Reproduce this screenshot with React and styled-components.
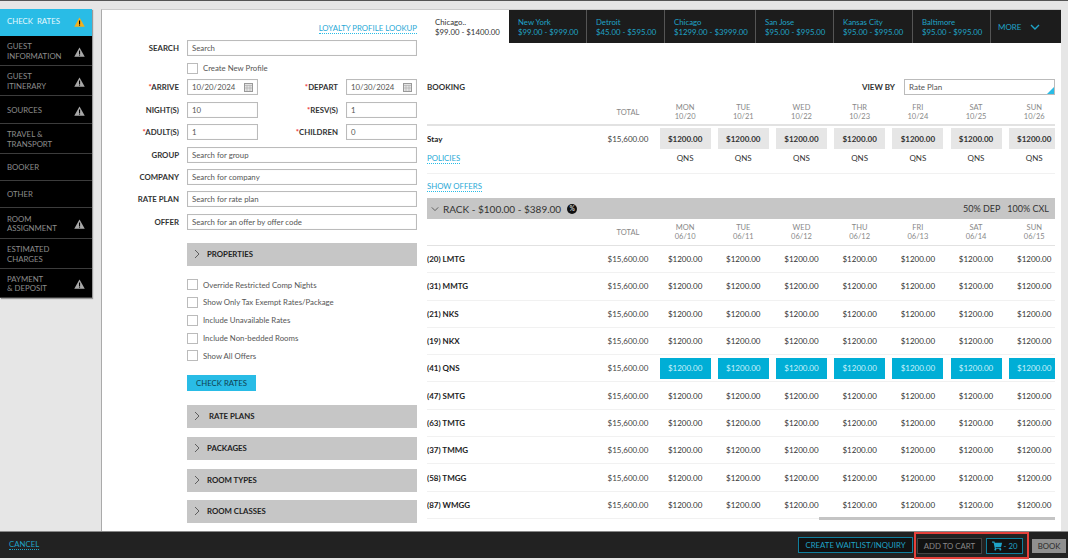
import React from 'react';
import styled, { createGlobalStyle } from 'styled-components';
import { FaShoppingCart } from 'react-icons/fa';

const GlobalStyle = createGlobalStyle`
  html, body {
    margin: 0;
    padding: 0;
    background: #e6e6e6;
    font-family: Lato, "Open Sans", sans-serif;
    color: #222;
  }
  * { box-sizing: border-box; }
`;

const Page = styled.div`
  width: 1068px;
  height: 560px;
  display: flex;
  flex-direction: column;
  border-top: 1px solid #555;
  overflow: hidden;
`;

const Content = styled.div`
  flex: 1;
  min-height: 0;
  display: flex;
  padding-top: 8px;
`;

const Sidebar = styled.nav`
  width: 92px;
  align-self: flex-start;
  flex-shrink: 0;
  margin-right: 9px;
  box-shadow: 1px 1px 1px #999;
`;

const SideItem = styled.div`
  height: ${p => p.$height}px;
  display: flex;
  align-items: center;
  justify-content: space-between;
  padding: ${p => (p.$active ? 0 : 2)}px 7px 0;
  background: ${p => (p.$active ? '#29bce6' : '#000')};
  color: ${p => (p.$active ? '#e6f8fd' : '#8d8d8d')};
  border-bottom: 1px solid ${p => (p.$active ? '#29bce6' : '#3c3c3c')};
  font-size: 7.8px;
  line-height: 9.4px;
  white-space: pre-line;
  word-spacing: ${p => (p.$active ? 2 : 0)}px;
`;

const Panel = styled.main`
  width: 960px;
  display: flex;
  background: #fff;
  border-left: 1px solid #aaa;
  border-top: 1px solid #ccc;
  overflow: hidden;
`;

const FormCol = styled.section`
  width: 315px;
  flex-shrink: 0;
  padding-top: 7px;
`;

const LinkRow = styled.div`
  display: flex;
  justify-content: flex-end;
  height: 23px;
  align-items: center;
`;

const TextLink = styled.span`
  color: #29a9d6;
  font-size: 7.8px;
  font-weight: 400;
  line-height: 10px;
  border-bottom: 1px dotted #29bce6;
`;

const FormRow = styled.div`
  display: grid;
  grid-template-columns: ${p => (p.$split ? '85px 71px 88px 71px' : '85px 230px')};
  align-items: center;
  height: 16px;
  margin-bottom: 6.4px;
`;

const Label = styled.label`
  font-size: 7.8px;
  font-weight: 700;
  color: #333;
  text-align: right;
  padding-right: 8px;
`;

const Req = styled.span`
  color: #e33;
`;

const Field = styled.div`
  height: 16px;
  border: 1px solid #bbb;
  box-shadow: inset 0 0 1px #ddd;
  display: flex;
  align-items: center;
  justify-content: space-between;
  padding: 0 4px;
  font-size: 7.8px;
  color: #555;
  background: #fff;
`;

const Box = styled.span`
  width: 11px;
  height: 11px;
  border: 1px solid #bbb;
  flex-shrink: 0;
  background: #fff;
`;

const CheckRow = styled.div`
  display: flex;
  align-items: center;
  gap: 5px;
  margin: 0 0 ${p => p.$after || 0}px 85px;
  height: ${p => p.$height || 17.8}px;
  font-size: 7.8px;
  color: #555;
`;

const Spacer = styled.div`
  height: 10px;
`;

const AccordionBar = styled.div`
  margin: ${p => p.$top || 0}px 0 0 85px;
  width: 230px;
  height: 23px;
  background: #c6c6c6;
  display: flex;
  align-items: center;
  padding-left: 7px;
  font-size: 7.8px;
  font-weight: 700;
  color: #222;
  gap: ${p => p.$gap || 7}px;
`;

const PrimaryButton = styled.button`
  display: block;
  margin: 10px 0 14px 85px;
  width: 69px;
  height: 16px;
  border: 0;
  padding: 0;
  background: #29bce6;
  color: #0f3f50;
  font: 400 7.8px Lato, sans-serif;
`;

const RightCol = styled.section`
  margin-left: 10px;
  width: 628px;
  flex-shrink: 0;
`;

const Tabs = styled.div`
  display: flex;
  height: 33px;
  margin-left: -2px;
  width: 636px;
`;

const Tab = styled.div`
  width: ${p => p.$width}px;
  flex-shrink: 0;
  padding: 7px 0 0 ${p => (p.$active ? 10 : 9)}px;
  background: ${p => (p.$active ? '#fff' : '#1c1c1c')};
  color: ${p => (p.$active ? '#333' : '#1fa3c7')};
  border-right: 1px solid ${p => (p.$active ? '#fff' : '#555')};
  font-size: 7.8px;
  line-height: 10px;
  white-space: pre-line;
`;

const MoreTab = styled.div`
  flex: 1;
  background: #1c1c1c;
  color: #1fa3c7;
  display: flex;
  align-items: center;
  gap: 9px;
  padding-left: 7px;
  font-size: 8px;
`;

const BookingHead = styled.div`
  display: flex;
  align-items: center;
  height: 16px;
  margin-top: 36px;
  font-size: 8px;
  font-weight: 700;
  color: #333;
`;

const ViewBy = styled.span`
  margin-left: auto;
  margin-right: 9px;
`;

const SelectBox = styled.div`
  position: relative;
  width: 151px;
  height: 16px;
  border: 1px solid #bbb;
  display: flex;
  align-items: center;
  padding-left: 4px;
  font-weight: 400;
  color: #555;
  overflow: hidden;

  &::after {
    content: '';
    position: absolute;
    right: 0;
    bottom: 0;
    border-style: solid;
    border-width: 0 0 7px 7px;
    border-color: transparent transparent #29bce6 transparent;
  }
`;

const Grid = styled.div`
  display: grid;
  grid-template-columns: 173px 56px repeat(7, 58.2px);
  align-items: ${p => p.$align || 'center'};
  height: ${p => p.$height}px;
  padding-top: ${p => p.$pad || 0}px;
  width: 628px;
  overflow: hidden;
  border-bottom: ${p => p.$line || '0'} solid ${p => p.$lineColor || '#f1f1f1'};
`;

const HeadCell = styled.div`
  text-align: center;
  font-size: 7.5px;
  line-height: 9px;
  color: #888;
  white-space: pre-line;
`;

const NameCell = styled.div`
  font-size: 8px;
  font-weight: 700;
  color: #222;
`;

const TotalCell = styled.div`
  text-align: center;
  font-size: 8px;
  color: #444;
`;

const PriceCell = styled.div`
  justify-self: center;
  width: 51px;
  height: 21px;
  display: flex;
  align-items: center;
  justify-content: center;
  font-size: 8px;
  font-weight: ${p => (p.$grey ? 700 : 400)};
  background: ${p => (p.$blue ? '#00aed6' : p.$grey ? '#e6e6e6' : 'transparent')};
  color: ${p => (p.$blue ? '#c9f1fb' : '#333')};
`;

const PlainCell = styled.div`
  text-align: center;
  font-size: 8px;
  color: #333;
`;

const OffersRow = styled.div`
  height: 24px;
  display: flex;
  align-items: center;
`;

const RackBar = styled.div`
  height: 21px;
  background: #c6c6c6;
  display: flex;
  align-items: center;
  padding: 0 6px 0 4px;
  font-size: 10px;
  color: #333;
  gap: 4px;
`;

const RackTerms = styled.span`
  margin-left: auto;
  font-size: 9px;
  display: flex;
  gap: 7px;
`;

const PercentBadge = styled.span`
  width: 10px;
  height: 10px;
  border-radius: 50%;
  background: #111;
  color: #ccc;
  font-size: 6.5px;
  font-weight: 700;
  display: inline-flex;
  align-items: center;
  justify-content: center;
  margin-left: 2px;
`;

const ScrollTrack = styled.div`
  height: 3px;
  margin: -2px 0 0 392px;
  background: #c4c4c4;
`;

const Footer = styled.footer`
  height: 27px;
  margin-bottom: 2px;
  flex-shrink: 0;
  background: #222;
  border-top: 1px solid #888;
  display: flex;
  align-items: center;
  padding: 0 2px 0 9px;
  font-size: 7.8px;
`;

const CancelLink = styled.span`
  color: #1fa3c7;
  border-bottom: 1px dotted #1fa3c7;
  line-height: 9px;
  margin-right: auto;
`;

const FootButton = styled.div`
  height: 16px;
  width: ${p => p.$width}px;
  flex-shrink: 0;
  display: flex;
  align-items: center;
  justify-content: center;
  gap: 2px;
  border: 1px solid ${p => (p.$muted ? '#444' : '#0f7f9e')};
  background: #111;
  color: ${p => (p.$muted ? '#888' : '#1fa3c7')};
`;

const BookButton = styled.div`
  width: 34px;
  height: 14px;
  margin: 2px 0 0 3px;
  background: #8f8f8f;
  color: #2a2a2a;
  display: flex;
  align-items: center;
  justify-content: center;
`;

const CartGroup = styled.div`
  display: flex;
  gap: 4px;
  align-items: center;
  margin: 1px 0 0 1px;
  padding: 0 6px 0 3px;
  width: 115px;
  height: 27px;
  flex-shrink: 0;
  outline: 2px solid #e5403a;
  outline-offset: -2px;
`;

const Warning = ({ color }) => (
  <svg width="11" height="10" viewBox="0 0 22 20" style={{ flexShrink: 0 }}>
    <path d="M11 1 L21.5 19.5 H0.5 Z" fill={color} />
    <rect x="10" y="7" width="2.2" height="7" fill="#000" />
    <rect x="10" y="15" width="2.2" height="2.2" fill="#000" />
  </svg>
);

const Calendar = () => (
  <svg width="9" height="9" viewBox="0 0 9 9" style={{ flexShrink: 0 }}>
    <rect x="0.5" y="0.5" width="8" height="8" fill="#e4e4e4" stroke="#999" />
    <path d="M1 2.5 H8 M3 2.5 V8 M6 2.5 V8 M1 5 H8" stroke="#aaa" strokeWidth="0.6" />
  </svg>
);

const ChevronRight = () => (
  <svg width="6" height="10" viewBox="0 0 6 10" style={{ flexShrink: 0 }}>
    <path d="M1 1 L5 5 L1 9" fill="none" stroke="#444" strokeWidth="0.8" />
  </svg>
);

const ChevronDown = ({ color = '#444', width = 8, weight = 1 }) => (
  <svg width={width} height="6" viewBox="0 0 10 6" style={{ flexShrink: 0 }}>
    <path d="M1 1 L5 5 L9 1" fill="none" stroke={color} strokeWidth={weight} />
  </svg>
);

const sideItems = [
  { text: 'CHECK RATES', height: 27, active: true, warn: '#f2b01e' },
  { text: 'GUEST\nINFORMATION', height: 30, warn: '#a8a8a8' },
  { text: 'GUEST\nITINERARY', height: 30, warn: '#a8a8a8' },
  { text: 'SOURCES', height: 28, warn: '#a8a8a8' },
  { text: 'TRAVEL &\nTRANSPORT', height: 30 },
  { text: 'BOOKER', height: 27 },
  { text: 'OTHER', height: 27 },
  { text: 'ROOM\nASSIGNMENT', height: 31, warn: '#a8a8a8' },
  { text: 'ESTIMATED\nCHARGES', height: 30 },
  { text: 'PAYMENT\n& DEPOSIT', height: 29, warn: '#a8a8a8' },
];

const tabs = [
  { text: 'New York\n$99.00 - $999.00', width: 78 },
  { text: 'Detroit\n$45.00 - $595.00', width: 78 },
  { text: 'Chicago\n$1299.00 - $3999.00', width: 91 },
  { text: 'San Jose\n$95.00 - $995.00', width: 78 },
  { text: 'Kansas City\n$95.00 - $995.00', width: 79 },
  { text: 'Baltimore\n$95.00 - $995.00', width: 78 },
];

const textFields = [
  ['GROUP', 'Search for group'],
  ['COMPANY', 'Search for company'],
  ['RATE PLAN', 'Search for rate plan'],
  ['OFFER', 'Search for an offer by offer code'],
];

const options = [
  'Override Restricted Comp Nights',
  'Show Only Tax Exempt Rates/Package',
  'Include Unavailable Rates',
  'Include Non-bedded Rooms',
  'Show All Offers',
];

const stayDays = ['MON\n10/20', 'TUE\n10/21', 'WED\n10/22', 'THR\n10/23', 'FRI\n10/24', 'SAT\n10/25', 'SUN\n10/26'];
const rackDays = ['MON\n06/10', 'TUE\n06/11', 'WED\n06/12', 'THU\n06/12', 'FRI\n06/13', 'SAT\n06/14', 'SUN\n06/15'];
const rooms = ['(20) LMTG', '(31) MMTG', '(21) NKS', '(19) NKX', '(41) QNS', '(47) SMTG', '(63) TMTG', '(37) TMMG', '(58) TMGG', '(87) WMGG'];
const week = [0, 1, 2, 3, 4, 5, 6];

export default function App() {
  return (
    <>
      <GlobalStyle />
      <Page>
        <Content>
          <Sidebar>
            {sideItems.map(item => (
              <SideItem key={item.text} $height={item.height} $active={item.active}>
                <span>{item.text}</span>
                {item.warn && <Warning color={item.warn} />}
              </SideItem>
            ))}
          </Sidebar>

          <Panel>
            <FormCol>
              <LinkRow>
                <TextLink>LOYALTY PROFILE LOOKUP</TextLink>
              </LinkRow>
              <FormRow>
                <Label>SEARCH</Label>
                <Field>Search</Field>
              </FormRow>
              <CheckRow $height={12} $after={5}>
                <Box />
                Create New Profile
              </CheckRow>
              <FormRow $split>
                <Label><Req>*</Req>ARRIVE</Label>
                <Field>10/20/2024<Calendar /></Field>
                <Label><Req>*</Req>DEPART</Label>
                <Field>10/30/2024<Calendar /></Field>
              </FormRow>
              <FormRow $split>
                <Label>NIGHT(S)</Label>
                <Field>10</Field>
                <Label><Req>*</Req>RESV(S)</Label>
                <Field>1</Field>
              </FormRow>
              <FormRow $split>
                <Label><Req>*</Req>ADULT(S)</Label>
                <Field>1</Field>
                <Label><Req>*</Req>CHILDREN</Label>
                <Field>0</Field>
              </FormRow>
              {textFields.map(([label, hint]) => (
                <FormRow key={label}>
                  <Label>{label}</Label>
                  <Field>{hint}</Field>
                </FormRow>
              ))}
              <AccordionBar $top={13}><ChevronRight />PROPERTIES</AccordionBar>
              <Spacer />
              {options.map(text => (
                <CheckRow key={text}>
                  <Box />
                  {text}
                </CheckRow>
              ))}
              <PrimaryButton>CHECK RATES</PrimaryButton>
              <AccordionBar $gap={9}><ChevronRight />RATE PLANS</AccordionBar>
              <AccordionBar $top={9}><ChevronRight />PACKAGES</AccordionBar>
              <AccordionBar $top={9}><ChevronRight />ROOM TYPES</AccordionBar>
              <AccordionBar $top={8}><ChevronRight />ROOM CLASSES</AccordionBar>
            </FormCol>

            <RightCol>
              <Tabs>
                <Tab $active $width={84}>{'Chicago..\n$99.00 - $1400.00'}</Tab>
                {tabs.map(tab => (
                  <Tab key={tab.text} $width={tab.width}>{tab.text}</Tab>
                ))}
                <MoreTab>MORE <ChevronDown color="#1fa3c7" width={10} weight={1.4} /></MoreTab>
              </Tabs>

              <BookingHead>
                BOOKING
                <ViewBy>VIEW BY</ViewBy>
                <SelectBox>Rate Plan</SelectBox>
              </BookingHead>

              <Grid $height={31} $pad={5} $line="2px" $lineColor="#e2e2e2">
                <span />
                <HeadCell>TOTAL</HeadCell>
                {stayDays.map(d => <HeadCell key={d}>{d}</HeadCell>)}
              </Grid>
              <Grid $height={25}>
                <NameCell>Stay</NameCell>
                <TotalCell>$15,600.00</TotalCell>
                {week.map(i => <PriceCell key={i} $grey>$1200.00</PriceCell>)}
              </Grid>
              <Grid $height={23} $align="start" $pad={2} $line="1px">
                <NameCell><TextLink>POLICIES</TextLink></NameCell>
                <span />
                {week.map(i => <PlainCell key={i}>QNS</PlainCell>)}
              </Grid>
              <OffersRow><TextLink>SHOW OFFERS</TextLink></OffersRow>

              <RackBar>
                <ChevronDown />
                RACK - $100.00 - $389.00
                <PercentBadge>%</PercentBadge>
                <RackTerms><span>50% DEP</span><span>100% CXL</span></RackTerms>
              </RackBar>
              <Grid $height={27} $line="1px" $lineColor="#e2e2e2">
                <span />
                <HeadCell>TOTAL</HeadCell>
                {rackDays.map(d => <HeadCell key={d}>{d}</HeadCell>)}
              </Grid>
              {rooms.map(room => {
                const selected = room === '(41) QNS';
                return (
                  <Grid key={room} $height={27.3} $line="1px">
                    <NameCell>{room}</NameCell>
                    <TotalCell>$15,600.00</TotalCell>
                    {week.map(i => <PriceCell key={i} $blue={selected}>$1200.00</PriceCell>)}
                  </Grid>
                );
              })}
              <ScrollTrack />
            </RightCol>
          </Panel>
        </Content>

        <Footer>
          <CancelLink>CANCEL</CancelLink>
          <FootButton $width={115}>CREATE WAITLIST/INQUIRY</FootButton>
          <CartGroup>
            <FootButton $width={65} $muted>ADD TO CART</FootButton>
            <FootButton $width={37}><FaShoppingCart size={10} /> - 20</FootButton>
          </CartGroup>
          <BookButton>BOOK</BookButton>
        </Footer>
      </Page>
    </>
  );
}
